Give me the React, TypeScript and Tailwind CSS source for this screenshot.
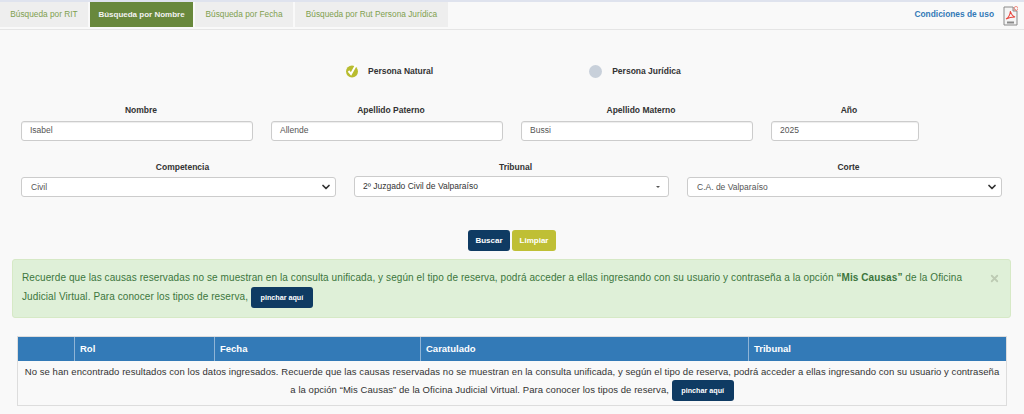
import { ChevronDown, X } from 'lucide-react';

const tabs = [
  { label: 'Búsqueda por RIT', w: 'w-[88px]' },
  { label: 'Búsqueda por Nombre', w: 'w-[103px]', active: true },
  { label: 'Búsqueda por Fecha', w: 'w-[98px]' },
  { label: 'Búsqueda por Rut Persona Jurídica', w: 'w-[153px]' },
];

function Field({ label, value }: { label: string; value: string }) {
  return (
    <div className="px-[9px]">
      <div className="h-[15px] pl-[8px] text-center text-[8.500px] leading-[15px] font-bold text-[#333]">{label}</div>
      <div className="mt-[3px] flex h-[20px] items-center rounded-[3px] border border-[#ccc] bg-white px-2 pb-[1px] text-[8.500px] text-[#555] shadow-[inset_0_1px_1px_rgba(0,0,0,0.075)]">{value}</div>
    </div>
  );
}

function SelectField({ label, value, caret }: { label: string; value: string; caret?: boolean }) {
  return (
    <div className="px-[9px]">
      <div className="h-[15px] pl-[8px] text-center text-[8.500px] leading-[15px] font-bold text-[#333]">{label}</div>
      <div className={`flex items-center justify-between rounded-[3px] border border-[#ccc] bg-white text-[8.500px] ${caret ? 'mt-[1px] h-[21px] pr-[8px] pl-2 text-[#333]' : 'mt-[2px] h-[20px] pr-[3px] pl-[9px] text-[#555]'}`}>
        <span>{value}</span>
        {caret
          ? <span className="h-0 w-0 border-x-[2px] border-t-[2px] border-x-transparent border-t-[#555]" />
          : <ChevronDown size={12} strokeWidth={3.5} className="text-[#333]" />}
      </div>
    </div>
  );
}

function PincharBtn() {
  return (
    <button className="inline-block h-[21px] w-[62px] rounded-[3px] bg-[#0f3b63] align-middle text-[7.200px] leading-[21px] font-bold tracking-normal text-white">pinchar aquí</button>
  );
}

export default function App() {
  return (
    <div className="h-[414px] w-[1024px] overflow-hidden bg-[#f9f9f9] font-['Liberation_Sans',Arial,sans-serif]">
      <div className="h-[2px] bg-[#dfe3ee]" />

      {/* Tabs */}
      <div className="flex h-[28px] items-start justify-between border-b border-[#e5e5e5]">
        <div className="flex gap-[2px]">
          {tabs.map(t => (
            <div key={t.label} className={`flex h-[25px] items-center justify-center ${t.w} ${t.active ? 'bg-[#68883c] text-[8px] font-bold text-[#f2f2f2]' : 'bg-[#eeeeee] text-[8.300px] text-[#7f9f4f]'}`}>
              {t.label}
            </div>
          ))}
        </div>
        <div className="flex items-start pt-[4px] pr-[6px]">
          <a className="mt-[3px] text-[8.400px] leading-[10px] font-bold text-[#337ab7]">Condiciones de uso</a>
          <svg width="15" height="20" viewBox="0 0 15 20" className="ml-[9px]">
            <path d="M1 1h9l4 4v14H1z" fill="#f4f4f4" stroke="#8a8a8a" />
            <path d="M10 1v4h4" fill="#ddd" stroke="#8a8a8a" />
            <path d="M3 13c2-1 4-4 4.500-8 .5 3 2 5 4.500 6-3 0-6 .5-9 2z" fill="none" stroke="#e8473f" strokeWidth="1.100" />
            <rect x="4" y="15.500" width="7" height="2" fill="#8a8a8a" />
            <circle cx="13" cy="2.500" r="2" fill="none" stroke="#f08a80" />
          </svg>
        </div>
      </div>

      {/* Tipo persona */}
      <div className="mt-[31px] flex h-[20px] items-center">
        <div className="ml-[345px] flex items-center">
          <svg width="14" height="14" viewBox="0 0 14 14">
            <circle cx="7" cy="7.500" r="6" fill="#b8bc2f" />
            <path d="M3.500 7l2.500 3 5-9" fill="none" stroke="#fff" strokeWidth="2" />
          </svg>
          <span className="ml-[9px] text-[8.500px] font-bold text-[#333]">Persona Natural</span>
        </div>
        <div className="ml-[156px] flex items-center">
          <span className="h-[13px] w-[13px] rounded-full bg-[#c8d0da]" />
          <span className="ml-[10px] text-[8.500px] font-bold text-[#333]">Persona Jurídica</span>
        </div>
      </div>

      {/* Filtros */}
      <div className="mx-[12px] mt-[22px] grid w-[1000px] grid-cols-[250px_250px_250px_166px]">
        <Field label="Nombre" value="Isabel" />
        <Field label="Apellido Paterno" value="Allende" />
        <Field label="Apellido Materno" value="Bussi" />
        <Field label="Año" value="2025" />
      </div>
      <div className="mx-[12px] mt-[19px] grid w-[999px] grid-cols-3">
        <SelectField label="Competencia" value="Civil" />
        <SelectField label="Tribunal" value="2º Juzgado Civil de Valparaíso" caret />
        <SelectField label="Corte" value="C.A. de Valparaíso" />
      </div>

      <div className="mt-[33px] ml-[468px] flex gap-[2px]">
        <button className="h-[21px] w-[42px] rounded-[3px] bg-[#0f3b63] text-[8px] font-bold text-white">Buscar</button>
        <button className="h-[21px] w-[44px] rounded-[3px] bg-[#bfbf35] text-[8px] font-bold text-white">Limpiar</button>
      </div>

      {/* Aviso */}
      <div className="mx-[12px] mt-[8px] flex h-[59px] w-[999px] rounded-[3px] border border-[#d6e9c6] bg-[#dff0d8] pt-[8px] pr-[8px] pl-[9px] text-[10px] leading-[19px] tracking-[0.085px] text-[#3c763d]">
        <p className="w-[961px]">
          Recuerde que las causas reservadas no se muestran en la consulta unificada, y según el tipo de reserva, podrá acceder a ellas ingresando con su usuario y contraseña a la opción <b>“Mis Causas”</b> de la Oficina Judicial Virtual. Para conocer los tipos de reserva, <PincharBtn />
        </p>
        <X size={11} strokeWidth={4} className="mt-[5px] ml-[6px] text-[#bdcbb4]" />
      </div>

      {/* Resultados */}
      <div className="mx-[17px] mt-[18px] w-[990px] border border-[#ddd]">
        <div className="grid h-[24px] grid-cols-[57px_140px_206px_328px_1fr] bg-[#337ab7] text-[9.500px] font-bold text-white">
          <div className="border-r border-[#8fb4d6]" />
          <div className="flex items-center border-r border-[#8fb4d6] pl-[5px]">Rol</div>
          <div className="flex items-center border-r border-[#8fb4d6] pl-[5px]">Fecha</div>
          <div className="flex items-center border-r border-[#8fb4d6] pl-[5px]">Caratulado</div>
          <div className="flex items-center pl-[5px]">Tribunal</div>
        </div>
        <p className="h-[44px] px-[6px] pt-[3px] text-center text-[9.500px] leading-[16px] tracking-[0.06px] text-[#333]">
          No se han encontrado resultados con los datos ingresados. Recuerde que las causas reservadas no se muestran en la consulta unificada, y según el tipo de reserva, podrá acceder a ellas ingresando con su usuario y contraseña a la opción “Mis Causas” de la Oficina Judicial Virtual. Para conocer los tipos de reserva, <PincharBtn />
        </p>
      </div>
    </div>
  );
}
